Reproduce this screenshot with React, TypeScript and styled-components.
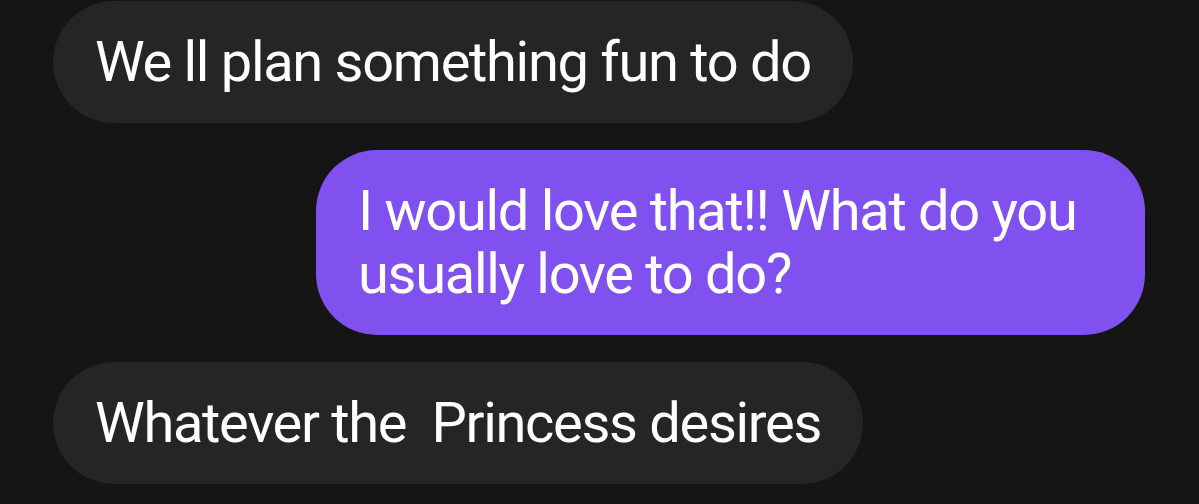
import React from 'react';
import styled, { createGlobalStyle } from 'styled-components';

const GlobalStyle = createGlobalStyle`
	html, body {
		margin: 0;
		padding: 0;
		background-color: #151515;
	}
	body {
		font-family: Roboto, 'Noto Sans', sans-serif;
	}
`;

const messages = [
	{ id: 1, mine: false, text: 'We ll plan something fun to do' },
	{ id: 2, mine: true, text: 'I would love that!! What do you usually love to do?' },
	{ id: 3, mine: false, text: 'Whatever the  Princess desires' }
];

const App: React.FC = () => {
	return (
		<Thread>
			<GlobalStyle />
			{messages.map((m) => (
				<Row key={m.id} mine={m.mine}>
					<Bubble mine={m.mine}>{m.text}</Bubble>
				</Row>
			))}
		</Thread>
	);
};

const Thread = styled.div`
	width: 1199px;
	height: 504px;
	box-sizing: border-box;
	padding: 1px 54px 0 53px;
	display: flex;
	flex-direction: column;
	gap: 27px;
	background-color: #151515;
	overflow: hidden;
`;

const Row = styled.div<{ mine: boolean }>`
	display: flex;
	justify-content: ${(p) => (p.mine ? 'flex-end' : 'flex-start')};
`;

const Bubble = styled.div<{ mine: boolean }>`
	box-sizing: border-box;
	max-width: 829px;
	padding: 29.5px 42px 29.5px 42px;
	border-radius: 61px;
	background-color: ${(p) => (p.mine ? '#8151ef' : '#252525')};
	color: #ffffff;
	font-size: 56px;
	line-height: 63px;
	white-space: pre-wrap;
	letter-spacing: -1.3px;
`;

export default App;
